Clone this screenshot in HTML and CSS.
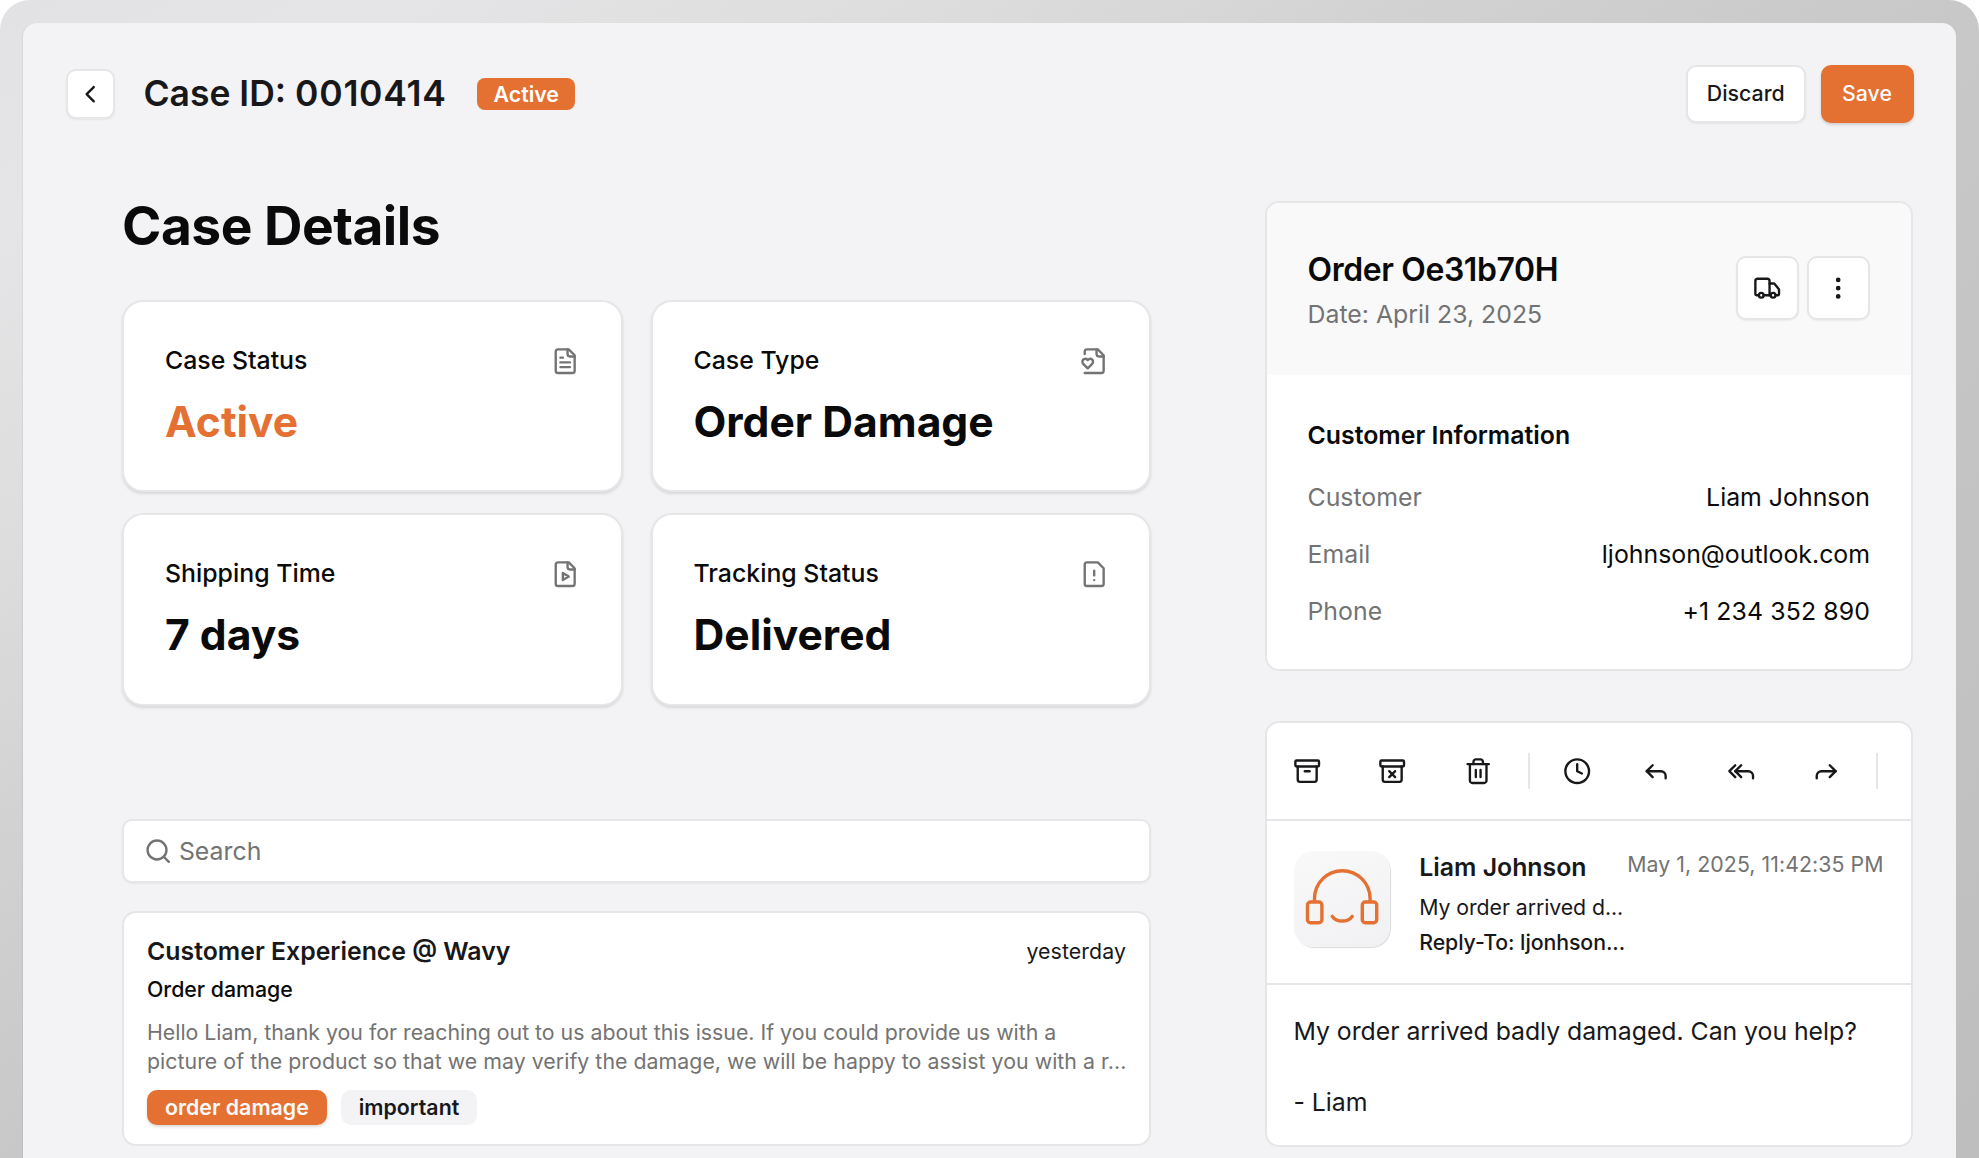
FILE: index.html
```html
<!DOCTYPE html>
<html lang="en">
<head>
<meta charset="utf-8">
<title>Case 0010414</title>
<link rel="stylesheet" href="styles.css">
</head>
<body>
<div class="frame">
<div class="panel">
  <header class="topbar">
    <button class="btn back" aria-label="Back"><svg class="icon icon-back" viewBox="0 0 24 24"><path d="m15 18-6-6 6-6"/></svg></button>
    <h1 class="case-id">Case ID: <span class="case-number">0010414</span></h1>
    <span class="status-badge">Active</span>
    <div class="actions">
      <button class="btn discard">Discard</button>
      <button class="btn save">Save</button>
    </div>
  </header>

  <div class="columns">
    <main class="left">
      <h2 class="page-title">Case Details</h2>
      <div class="stats">
        <section class="stat">
          <div class="stat-head"><span>Case Status</span><svg class="icon" viewBox="0 0 24 24"><path d="M15 2H6a2 2 0 0 0-2 2v16a2 2 0 0 0 2 2h12a2 2 0 0 0 2-2V7Z"/><path d="M14 2v4a2 2 0 0 0 2 2h4"/><path d="M10 9H8"/><path d="M16 13H8"/><path d="M16 17H8"/></svg></div>
          <div class="stat-value accent">Active</div>
        </section>
        <section class="stat">
          <div class="stat-head"><span>Case Type</span><svg class="icon" viewBox="0 0 24 24"><path d="M4 22h14a2 2 0 0 0 2-2V7l-5-5H6a2 2 0 0 0-2 2v2"/><path d="M14 2v4a2 2 0 0 0 2 2h4"/><path d="M10.29 10.7a2.43 2.43 0 0 0-2.66-.52c-.29.12-.56.3-.78.53l-.35.34-.35-.34a2.43 2.43 0 0 0-2.65-.53c-.3.12-.56.3-.79.53-.95.94-1 2.53.2 3.74L6.5 18l3.6-3.55c1.2-1.21 1.14-2.8.19-3.74Z"/></svg></div>
          <div class="stat-value">Order Damage</div>
        </section>
        <section class="stat">
          <div class="stat-head"><span>Shipping Time</span><svg class="icon" viewBox="0 0 24 24"><path d="M15 2H6a2 2 0 0 0-2 2v16a2 2 0 0 0 2 2h12a2 2 0 0 0 2-2V7Z"/><path d="M14 2v4a2 2 0 0 0 2 2h4"/><path d="m10 11 5 3-5 3v-6Z"/></svg></div>
          <div class="stat-value">7 days</div>
        </section>
        <section class="stat">
          <div class="stat-head"><span>Tracking Status</span><svg class="icon" viewBox="0 0 24 24"><path d="M15 2H6a2 2 0 0 0-2 2v16a2 2 0 0 0 2 2h12a2 2 0 0 0 2-2V7Z"/><path d="M12 9v4"/><path d="M12 17h.01"/></svg></div>
          <div class="stat-value">Delivered</div>
        </section>
      </div>

      <div class="search"><svg class="icon" viewBox="0 0 24 24"><circle cx="11" cy="11" r="8"/><path d="m21 21-4.3-4.3"/></svg><span>Search</span></div>

      <article class="thread">
        <div class="thread-head"><span class="thread-from">Customer Experience @ Wavy</span><span class="thread-when">yesterday</span></div>
        <div class="thread-subject">Order damage</div>
        <p class="thread-text">Hello Liam, thank you for reaching out to us about this issue. If you could provide us with a<br><span class="thread-text-last">picture of the product so that we may verify the damage, we will be happy to assist you with a r...</span></p>
        <div class="tags"><span class="tag tag-primary">order damage</span><span class="tag">important</span></div>
      </article>
    </main>

    <aside class="right">
      <section class="order">
        <div class="order-head">
          <div>
            <h3 class="order-title">Order Oe31b70H</h3>
            <div class="order-date">Date: April 23, 2025</div>
          </div>
          <div class="order-actions">
            <button class="btn square" aria-label="Track"><svg class="icon" viewBox="0 0 24 24"><path d="M14 18V6a2 2 0 0 0-2-2H4a2 2 0 0 0-2 2v11a1 1 0 0 0 1 1h2"/><path d="M15 18H9"/><path d="M19 18h2a1 1 0 0 0 1-1v-3.65a1 1 0 0 0-.22-.624l-3.48-4.35A1 1 0 0 0 17.52 8H14"/><circle cx="17" cy="18" r="2"/><circle cx="7" cy="18" r="2"/></svg></button>
            <button class="btn square" aria-label="More"><svg class="icon" viewBox="0 0 24 24"><circle cx="12" cy="12" r="1"/><circle cx="12" cy="5" r="1"/><circle cx="12" cy="19" r="1"/></svg></button>
          </div>
        </div>
        <div class="customer">
          <h4 class="customer-title">Customer Information</h4>
          <dl class="facts">
            <div class="fact"><dt>Customer</dt><dd>Liam Johnson</dd></div>
            <div class="fact"><dt>Email</dt><dd>ljohnson@outlook.com</dd></div>
            <div class="fact"><dt>Phone</dt><dd class="phone">+1 234 352 890</dd></div>
          </dl>
        </div>
      </section>

      <section class="mail">
        <div class="toolbar">
          <svg class="icon" viewBox="0 0 24 24"><rect width="20" height="5" x="2" y="3" rx="1"/><path d="M4 8v11a2 2 0 0 0 2 2h12a2 2 0 0 0 2-2V8"/><path d="M10 12h4"/></svg>
          <svg class="icon" viewBox="0 0 24 24"><rect width="20" height="5" x="2" y="3" rx="1"/><path d="M4 8v11a2 2 0 0 0 2 2h12a2 2 0 0 0 2-2V8"/><path d="m9.5 17 5-5"/><path d="m9.5 12 5 5"/></svg>
          <svg class="icon" viewBox="0 0 24 24"><path d="M3 6h18"/><path d="M19 6v14c0 1-1 2-2 2H7c-1 0-2-1-2-2V6"/><path d="M8 6V4c0-1 1-2 2-2h4c1 0 2 1 2 2v2"/><path d="M10 11v6"/><path d="M14 11v6"/></svg>
          <i class="sep"></i>
          <svg class="icon clock" viewBox="0 0 24 24"><circle cx="12" cy="12" r="10"/><path d="M12 6v6l4 2"/></svg>
          <svg class="icon" viewBox="0 0 24 24"><path d="m9 17-5-5 5-5"/><path d="M20 18v-2a4 4 0 0 0-4-4H4"/></svg>
          <svg class="icon" viewBox="0 0 24 24"><path d="m7 17-5-5 5-5"/><path d="m12 17-5-5 5-5"/><path d="M22 18v-2a4 4 0 0 0-4-4H7"/></svg>
          <svg class="icon" viewBox="0 0 24 24"><path d="m15 17 5-5-5-5"/><path d="M4 18v-2a4 4 0 0 1 4-4h12"/></svg>
          <i class="sep"></i>
        </div>
        <div class="sender">
          <div class="avatar"><svg viewBox="0 0 96 96"><path d="M20.5 50V47.5a27.8 27.8 0 0 1 55.6 0V50"/><rect x="13.5" y="51" width="14.4" height="20.7" rx="3"/><rect x="68.3" y="51" width="14.4" height="20.7" rx="3"/><path d="M38.3 65.4c4.5 6.2 15.4 6.2 19.9 0"/></svg></div>
          <div class="sender-text">
            <div class="sender-name">Liam Johnson</div>
            <div class="sender-subject">My order arrived d...</div>
            <div class="sender-reply">Reply-To: ljonhson...</div>
          </div>
          <time class="sender-date">May 1, 2025, 11:42:35 PM</time>
        </div>
        <div class="mail-body">My order arrived badly damaged. Can you help?<br><br>- Liam</div>
      </section>
    </aside>
  </div>
</div>
</div>
</body>
</html>
```

FILE: styles.css
```css
* { box-sizing: border-box; margin: 0; padding: 0; }

body {
  width: 1979px;
  height: 1158px;
  overflow: hidden;
  background: #fff;
  color: #0a0a0a;
  font-family: Inter, "Liberation Sans", sans-serif;
  font-size: 24.85px;
  line-height: 35.5px;
}

.frame {
  height: 1158px;
  padding: 23px 23px 0;
  border-radius: 30px 30px 0 0;
  background: linear-gradient(to bottom right, #e2e2e4 0%, #e5e5e7 10%, #dcdcdc 25%, #d1d1d1 37%, #c8c8c8 50%, #bebebe 100%);
}

.panel {
  height: 1135px;
  padding: 42px 42.5px 0 43px;
  border-radius: 14px 14px 0 0;
  background: #f3f3f5;
  box-shadow: -1px 0 1px rgba(0, 0, 0, .05);
}

.icon {
  flex: none;
  width: 28.4px;
  height: 28.4px;
  fill: none;
  stroke: currentColor;
  stroke-width: 2;
  stroke-linecap: round;
  stroke-linejoin: round;
}

/* Top bar */

.topbar { display: flex; align-items: center; height: 58px; }

.btn {
  display: flex;
  align-items: center;
  justify-content: center;
  border: 2px solid #e6e6e8;
  border-radius: 10px;
  background: #fff;
  box-shadow: 0 1px 2px rgba(0, 0, 0, .06);
  color: #18181b;
  font: 500 21.3px/28.4px Inter, "Liberation Sans", sans-serif;
}

.back { width: 49px; height: 49.5px; }
.icon-back { width: 28.4px; height: 28.4px; }
.case-id { margin-left: 28.4px; color: #18181b; font-size: 35.5px; font-weight: 600; }
.case-number { letter-spacing: .72px; }

.status-badge {
  margin-left: 30.5px;
  padding: 0 16.5px;
  border-radius: 8px;
  background: #e47032;
  color: #fff;
  font-size: 21.3px;
  font-weight: 600;
  line-height: 32px;
}

.actions { display: flex; gap: 14.5px; margin-left: auto; }
.discard { width: 120.5px; height: 58px; padding-bottom: 1px; }
.save { width: 93px; height: 58px; padding-bottom: 2px; border: 0; background: #e47032; color: #fafafa; box-shadow: 0 2px 3px rgba(0, 0, 0, .14); }

/* Columns */

.columns { display: flex; justify-content: space-between; padding-left: 56px; }
.left { width: 1029px; padding-top: 70.7px; }
.right { width: 648px; margin-right: 1px; padding-top: 78px; }

.page-title { font-size: 53.25px; font-weight: 700; line-height: 63.9px; letter-spacing: -.0093em; }

.stats { display: grid; grid-template-columns: 1fr 1fr; gap: 21.1px 28px; margin-top: 42.2px; }

.stat {
  height: 192.4px;
  padding: 41.2px 41px 0;
  border: 2px solid #e6e6e8;
  border-radius: 21px;
  background: #fff;
  box-shadow: 0 2px 3px rgba(0, 0, 0, .11);
}

.stat-head { display: flex; align-items: center; justify-content: space-between; font-weight: 500; }
.stat-head .icon { color: #737373; }
.stat-value { margin-top: 15.2px; font-size: 42.6px; font-weight: 700; line-height: 56.8px; }
.accent { color: #e47032; }

.search {
  display: flex;
  align-items: center;
  gap: 7px;
  height: 64px;
  margin-top: 113.3px;
  padding: 1px 19.5px 0;
  border: 2px solid #e6e6e8;
  border-radius: 10px;
  background: #fff;
  box-shadow: 0 1px 2px rgba(0, 0, 0, .05);
  color: #737373;
}

.thread {
  height: 235.5px;
  margin-top: 28px;
  padding: 21px 23px 0;
  border: 2px solid #e6e6e8;
  border-radius: 14px;
  background: #fff;
}

.thread-head { display: flex; align-items: center; justify-content: space-between; color: #18181b; }
.thread-from { font-weight: 600; }
.thread-when { font-size: 21.3px; letter-spacing: .1px; }
.thread-subject { margin-top: 6px; font-size: 21.3px; font-weight: 500; line-height: 28.4px; }
.thread-text { margin-top: 14.5px; color: #737373; font-size: 21.3px; line-height: 28.4px; white-space: nowrap; }
.thread-text-last { letter-spacing: .045px; }
.tags { display: flex; gap: 14px; margin-top: 14.5px; }

.tag {
  height: 35.5px;
  padding: 0 17.9px;
  border-radius: 10px;
  background: #f3f3f5;
  color: #18181b;
  font-size: 21.3px;
  font-weight: 600;
  letter-spacing: .04px;
}

.tag-primary { background: #e47032; color: #fafafa; box-shadow: 0 2px 3px rgba(0, 0, 0, .14); }

/* Order */

.order, .mail {
  overflow: hidden;
  border: 2px solid #e6e6e8;
  border-radius: 14px;
  background: #fff;
}

.order { height: 470px; }

.order-head {
  display: flex;
  justify-content: space-between;
  height: 171.5px;
  padding: 50.5px 40.5px 0 41px;
  background: #f9f9f9;
}

.order-title { font-size: 31.95px; font-weight: 600; line-height: 32px; letter-spacing: -.012em; }
.order-date { margin-top: 11.5px; color: #737373; }
.order-actions { display: flex; gap: 8px; margin-top: 2.5px; }
.square { width: 63px; height: 63.5px; }

.customer { padding: 43px 40.5px 0 41px; }
.customer-title { font-size: 24.85px; font-weight: 600; }
.facts { display: grid; gap: 21.3px; margin-top: 27.2px; }
.fact { display: flex; justify-content: space-between; }
.fact dt { color: #737373; }
.phone { letter-spacing: .1px; }

/* Mail */

.mail { height: 426px; margin-top: 50.4px; color: #18181b; }

.toolbar {
  display: flex;
  align-items: center;
  gap: 56.8px;
  height: 97.5px;
  padding: 0 0 0 26.8px;
  border-bottom: 2px solid #e6e6e8;
}

.sep { width: 2px; height: 35.5px; margin: 0 -21px; background: #e6e6e8; }
.sep + .clock { margin: 0 -7px 0 -2.3px; }

.sender { display: flex; height: 164px; padding: 29.4px 27px 0 27.3px; border-bottom: 2px solid #e6e6e8; }

.avatar {
  flex: none;
  width: 96px;
  height: 96px;
  margin-top: .7px;
  border-radius: 20px;
  background: linear-gradient(160deg, #f9f9fa, #f1f1f3);
  box-shadow: 1px 1px 1px rgba(0, 0, 0, .15);
}

.avatar svg { display: block; fill: none; stroke: #e47032; stroke-width: 3.4; stroke-linecap: round; }

.sender-text { flex: none; margin-left: 29.4px; }
.sender-name { font-weight: 600; }
.sender-subject, .sender-reply { margin-top: 7px; font-size: 21.3px; line-height: 28.4px; letter-spacing: -.07px; }
.sender-reply { font-weight: 500; }
.sender-date { margin-left: auto; color: #737373; font-size: 21.3px; line-height: 28.4px; letter-spacing: .06px; white-space: nowrap; }

.mail-body { padding: 29px 20px 0 27px; letter-spacing: -.05px; }
```
